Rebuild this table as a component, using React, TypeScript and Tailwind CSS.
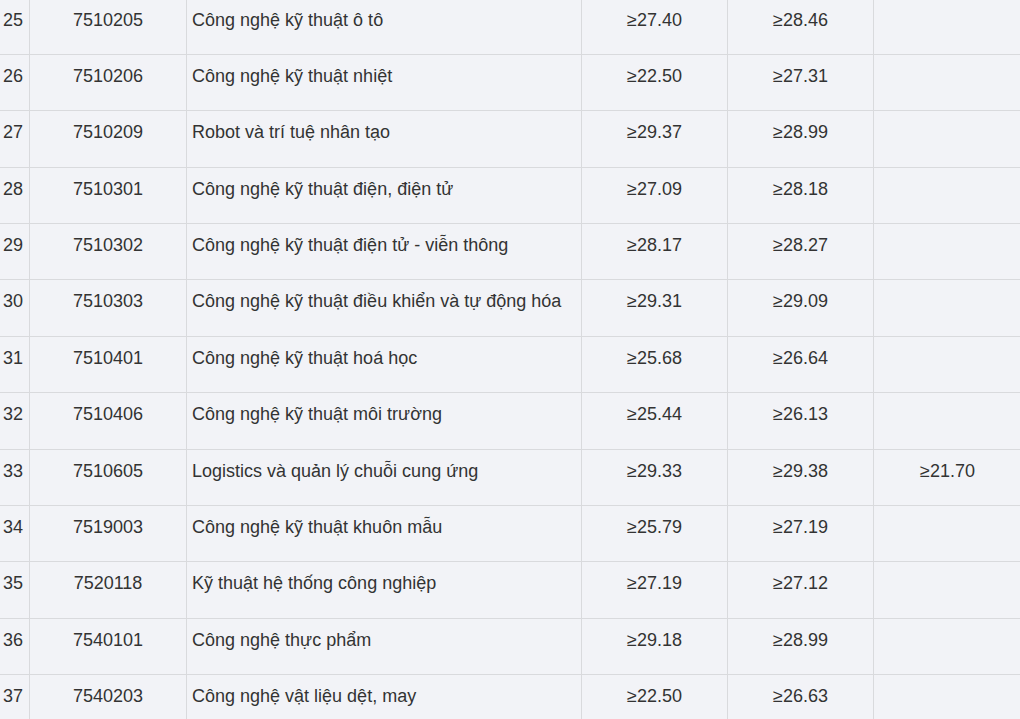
const rows = [
  ["25", "7510205", "Công nghệ kỹ thuật ô tô", "≥27.40", "≥28.46", ""],
  ["26", "7510206", "Công nghệ kỹ thuật nhiệt", "≥22.50", "≥27.31", ""],
  ["27", "7510209", "Robot và trí tuệ nhân tạo", "≥29.37", "≥28.99", ""],
  ["28", "7510301", "Công nghệ kỹ thuật điện, điện tử", "≥27.09", "≥28.18", ""],
  ["29", "7510302", "Công nghệ kỹ thuật điện tử - viễn thông", "≥28.17", "≥28.27", ""],
  ["30", "7510303", "Công nghệ kỹ thuật điều khiển và tự động hóa", "≥29.31", "≥29.09", ""],
  ["31", "7510401", "Công nghệ kỹ thuật hoá học", "≥25.68", "≥26.64", ""],
  ["32", "7510406", "Công nghệ kỹ thuật môi trường", "≥25.44", "≥26.13", ""],
  ["33", "7510605", "Logistics và quản lý chuỗi cung ứng", "≥29.33", "≥29.38", "≥21.70"],
  ["34", "7519003", "Công nghệ kỹ thuật khuôn mẫu", "≥25.79", "≥27.19", ""],
  ["35", "7520118", "Kỹ thuật hệ thống công nghiệp", "≥27.19", "≥27.12", ""],
  ["36", "7540101", "Công nghệ thực phẩm", "≥29.18", "≥28.99", ""],
  ["37", "7540203", "Công nghệ vật liệu dệt, may", "≥22.50", "≥26.63", ""],
];

const cell =
  "h-[56.36px] border-r border-b border-[#d9dadd] pt-[11px] leading-[20px] whitespace-nowrap overflow-hidden";

export default function App() {
  return (
    <div className="w-[1020px] h-[719px] overflow-hidden bg-[#f2f3f7] text-[#333333] text-[18px] font-['Liberation_Sans',Arial,sans-serif]">
      <div className="-mt-[1.36px] w-[1022px] grid grid-cols-[30px_157px_395px_146px_146px_148px]">
        {rows.map((r) => (
          <div key={r[0]} className="contents">
            <div className={`${cell} pl-[3px]`}>{r[0]}</div>
            <div className={`${cell} text-center`}>{r[1]}</div>
            <div className={`${cell} pl-[5px]`}>{r[2]}</div>
            <div className={`${cell} text-center`}>{r[3]}</div>
            <div className={`${cell} text-center`}>{r[4]}</div>
            <div className={`${cell} text-center`}>{r[5]}</div>
          </div>
        ))}
      </div>
    </div>
  );
}
